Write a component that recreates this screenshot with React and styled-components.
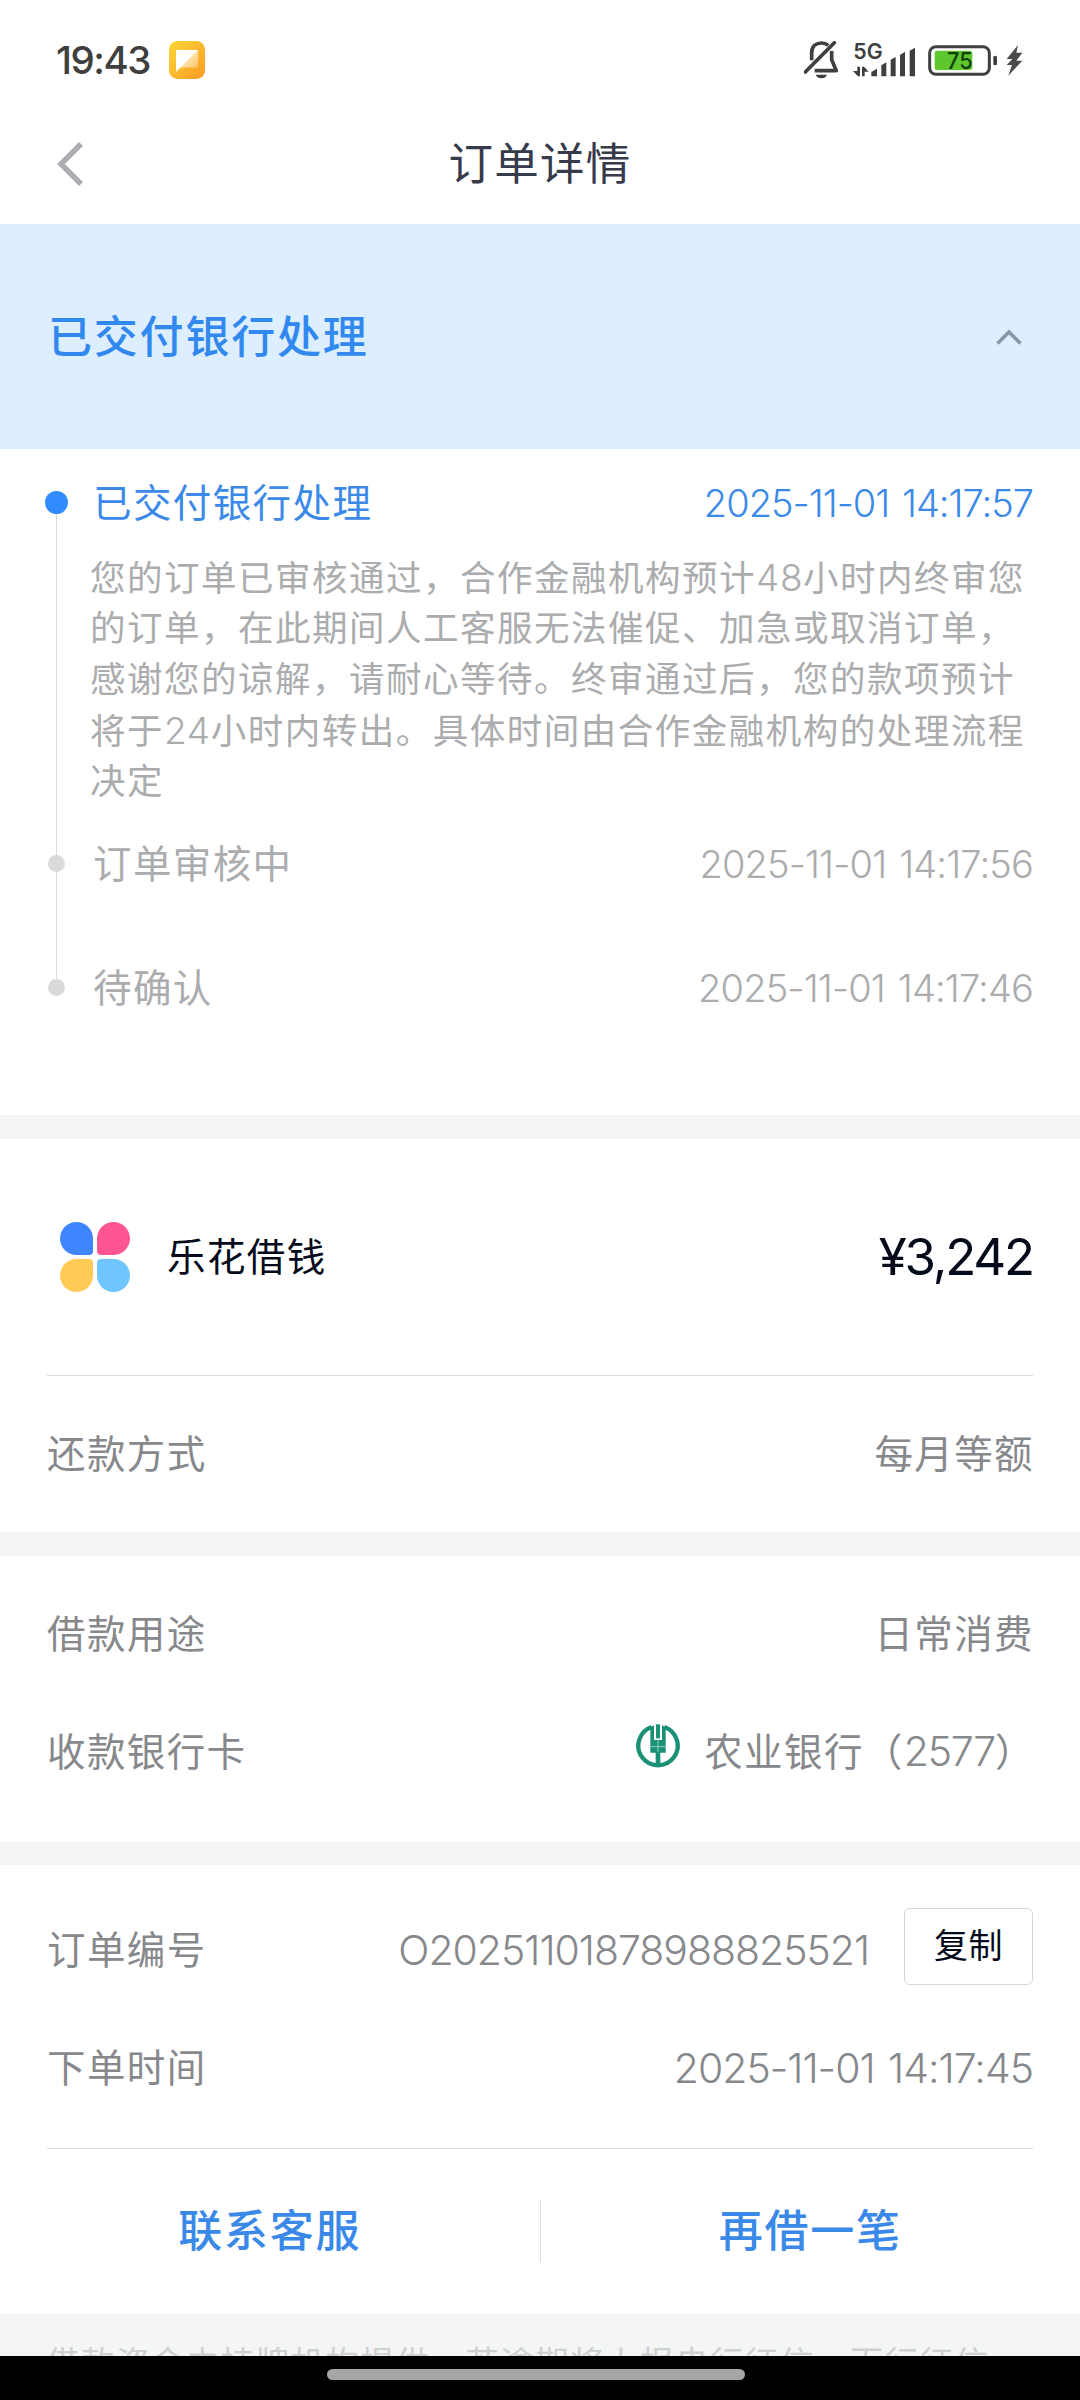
import React from 'react';
import styled, { createGlobalStyle } from 'styled-components';

const steps = [
  {
    title: '已交付银行处理',
    time: '2025-11-01 14:17:57',
    active: true,
    lines: [
      '您的订单已审核通过，合作金融机构预计48小时内终审您',
      '的订单，在此期间人工客服无法催促、加急或取消订单，',
      '感谢您的谅解，请耐心等待。终审通过后，您的款项预计',
      '将于24小时内转出。具体时间由合作金融机构的处理流程',
      '决定',
    ],
  },
  { title: '订单审核中', time: '2025-11-01 14:17:56' },
  { title: '待确认', time: '2025-11-01 14:17:46' },
];

// numbers inside Chinese text are set lighter and a touch larger
const withDigits = (line) =>
  line.split(/(\d+)/).map((part, i) => (i % 2 ? <NoteDigits key={i}>{part}</NoteDigits> : part));

const NoteIcon = () => (
  <svg width="36" height="38" viewBox="0 0 36 38">
    <defs>
      <linearGradient id="note" x1="0" y1="0" x2="1" y2="1">
        <stop offset="0" stopColor="#fbd836" />
        <stop offset="1" stopColor="#fb9a26" />
      </linearGradient>
      <linearGradient id="fold" x1="0" y1="0" x2="1" y2="1">
        <stop offset="0.3" stopColor="#fff" stopOpacity="0.75" />
        <stop offset="1" stopColor="#fff" stopOpacity="0.25" />
      </linearGradient>
    </defs>
    <rect width="36" height="38" rx="8.5" fill="url(#note)" />
    <path d="M29 9v17.500H11z" fill="url(#fold)" />
    <path d="M7 9h22L7 31z" fill="#fff" />
  </svg>
);

const MuteIcon = () => (
  <svg width="35" height="38" viewBox="12 36 105 114" fill="none" stroke="#3f3f3f">
    <path d="M35 94V72C35 50 50 42 65 42c8 0 15 3 20 7" strokeWidth="11" />
    <path d="M95 66v26l14 33H44" strokeWidth="11" strokeLinejoin="round" />
    <path d="M16 129l87-88" strokeWidth="11" strokeLinecap="round" />
    <path d="M47 137h34c-4 14-30 14-34 0z" fill="#3f3f3f" stroke="none" />
  </svg>
);

const SignalIcon = () => (
  <svg width="64" height="34" viewBox="156 35 192 102" fill="#3f3f3f" overflow="visible">
    <text x="160" y="84" fontFamily="Inter, sans-serif" fontSize="64" fontWeight="600" textLength="88" lengthAdjust="spacingAndGlyphs">5G</text>
    <path d="M172 106h8v29h-6l-15-16h13zM186 135v-29h6l14 15h-12v14z" />
    <path d="M214 135v-13l17-10v23zM244 135v-33l15-9v42zM272 135V85l15-8v58zM300 135V71l15-10v74zM329 135V58l16-9v86z" />
  </svg>
);

const BatteryIcon = () => (
  <svg width="70" height="31" viewBox="386 43 210 93" overflow="visible">
    <rect x="391" y="48" width="179" height="83" rx="19" fill="none" stroke="#3f3f3f" strokeWidth="9" />
    <rect x="406" y="60" width="113" height="58" rx="8" fill="#5fc72e" />
    <rect x="582" y="75" width="11" height="29" rx="5" fill="#3f3f3f" />
    <text x="443" y="115" fontFamily="Inter, sans-serif" fontSize="70" fontWeight="500" fill="#12400a" textLength="77" lengthAdjust="spacingAndGlyphs">75</text>
  </svg>
);

const BoltIcon = () => (
  <svg width="18" height="31" viewBox="615 43 54 93" fill="#4a4a4a">
    <path d="M654 43l-34 42h17l-17 18h16l-11 32 42-45h-18l18-24h-18z" />
  </svg>
);

const FlowerLogo = () => (
  <svg width="70" height="70" viewBox="0 0 70 70">
    <path d="M16.500 0a16.500 16.500 0 0 1 16.500 16.500v12.500a4 4 0 0 1-4 4H16.500a16.500 16.500 0 0 1 0-33z" fill="#3f85ff" />
    <path d="M53.500 0a16.500 16.500 0 0 1 0 33H41a4 4 0 0 1-4-4V16.500A16.500 16.500 0 0 1 53.500 0z" fill="#ff5595" />
    <path d="M16.500 37H29a4 4 0 0 1 4 4v12.500A16.500 16.500 0 1 1 16.500 37z" fill="#ffcb55" />
    <path d="M41 37h12.500A16.500 16.500 0 1 1 37 53.500V41a4 4 0 0 1 4-4z" fill="#6fc5ff" />
  </svg>
);

const BankLogo = () => (
  <svg width="44" height="44" viewBox="0 0 132 132" fill="none" stroke="#1a9175">
    <path d="M47 9A59 59 0 1 0 85 9" strokeWidth="13" />
    <path d="M43 10l11-6v44h24V4l11 6v76H73v38H59V86H43z" fill="#1a9175" stroke="none" />
    <path d="M60 1h12v42H60z" fill="#1a9175" stroke="none" />
    <path d="M66 48v36M44 68h44" stroke="#8fd0c0" strokeWidth="3" />
  </svg>
);

const App = () => (
  <Screen>
    <GlobalStyle />
    <StatusBar>
      <Clock>19:43</Clock>
      <NoteIcon />
      <StatusIcons>
        <MuteIcon />
        <SignalIcon />
        <BatteryIcon />
        <BoltIcon />
      </StatusIcons>
    </StatusBar>

    <NavBar>
      <BackButton aria-label="返回">
        <svg width="26" height="44" viewBox="0 0 26 44" fill="none" stroke="#adadb2" strokeWidth="5.500">
          <path d="M24 2L4 22l20 20" />
        </svg>
      </BackButton>
      <PageTitle>订单详情</PageTitle>
    </NavBar>

    <Banner>
      <BannerText>已交付银行处理</BannerText>
      <svg width="26" height="16" viewBox="0 0 26 16" fill="none" stroke="#8797a8" strokeWidth="3.500">
        <path d="M1.500 14.500L13 3l11.500 11.500" />
      </svg>
    </Banner>

    <Timeline>
      {steps.map((step, i) => (
        <Step key={step.time} $last={i === steps.length - 1}>
          <Rail>
            <Dot $active={step.active} />
            {i < steps.length - 1 && <RailLine />}
          </Rail>
          <StepBody>
            <StepHead $active={step.active}>
              <StepTitle>{step.title}</StepTitle>
              <StepTime $active={step.active}>{step.time}</StepTime>
            </StepHead>
            {step.lines && (
              <StepNote>
                {step.lines.map((line) => <NoteLine key={line}>{withDigits(line)}</NoteLine>)}
              </StepNote>
            )}
          </StepBody>
        </Step>
      ))}
    </Timeline>

    <Product>
      <ProductHead>
        <FlowerLogo />
        <ProductName>乐花借钱</ProductName>
        <Amount>¥3,242</Amount>
      </ProductHead>
      <Row $height={157}>
        <Label>还款方式</Label>
        <Value>每月等额</Value>
      </Row>
    </Product>

    <Usage>
      <Row $height={118}>
        <Label>借款用途</Label>
        <Value>日常消费</Value>
      </Row>
      <Row $height={118}>
        <Label>收款银行卡</Label>
        <BankCard>
          <BankLogo />
          <Value>农业银行（<Digits>2577</Digits>）</Value>
        </BankCard>
      </Row>
    </Usage>

    <Order>
      <Row $height={118}>
        <Label>订单编号</Label>
        <OrderNo>O20251101878988825521</OrderNo>
        <CopyButton>复制</CopyButton>
      </Row>
      <Row $height={118}>
        <Label>下单时间</Label>
        <OrderTime>2025-11-01 14:17:45</OrderTime>
      </Row>
      <Actions>
        <Action>联系客服</Action>
        <ActionSplit />
        <Action>再借一笔</Action>
      </Actions>
    </Order>

    <Disclaimer>借款资金由持牌机构提供，若逾期将上报央行征信，百行征信</Disclaimer>
    <GestureBar><Pill /></GestureBar>
  </Screen>
);

export default App;

const GlobalStyle = createGlobalStyle`
  * { box-sizing: border-box; }
  body { margin: 0; background: #f4f5f5; }
  button { border: none; background: none; padding: 0; font: inherit; color: inherit; }
  svg { display: block; flex: none; }
`;

const Screen = styled.div`
  width: 1080px; height: 2400px; overflow: hidden;
  display: flex; flex-direction: column;
  background: #f4f5f5; color: #87888b;
  font-family: Inter, "Noto Sans CJK SC", sans-serif;
  font-size: 38.5px; line-height: 1.2; white-space: nowrap;
`;

const StatusBar = styled.div`
  flex: none; height: 120px; padding: 0 57px 0 56px; background: #fff;
  display: flex; align-items: center;
`;
const Clock = styled.span`
  width: 113px; font-size: 38.5px; font-weight: 500; letter-spacing: -1.5px; color: #3f3f3f;
`;
const StatusIcons = styled.div`
  margin-left: auto; display: flex; align-items: center;
  > :nth-child(2) { margin: 0 12px 0 13px; }
  > :nth-child(4) { margin-left: 7px; }
`;

const NavBar = styled.div`
  flex: none; height: 104px; padding: 0 57px; background: #fff;
  display: grid; grid-template-columns: 60px 1fr 60px; align-items: center;
`;
const BackButton = styled.button` justify-self: start; margin-bottom: 16px; `;
const PageTitle = styled.h1`
  margin: 0 0 15px; text-align: center; font-size: 44.5px; font-weight: 400;
  letter-spacing: 1.2px; color: #363a4a;
`;

const Banner = styled.div`
  flex: none; height: 225px; padding: 0 58px 0 48px; background: #ddeeff;
  display: flex; align-items: center; justify-content: space-between;
`;
const BannerText = styled.span`
  padding-top: 1px; font-size: 44px; font-weight: 500; letter-spacing: 1.8px; color: #3189f0;
`;

const Timeline = styled.section`
  flex: none; height: 666px; padding: 24px 47px 0 45px; background: #fff;
`;
const Step = styled.div`
  display: flex; height: ${(p) => (p.$last ? '60px' : 'auto')};
  min-height: ${(p) => (p.$last ? 0 : '124px')};
`;
const Rail = styled.div`
  width: 23px; padding-top: 18px; margin-bottom: -18px;
  display: flex; flex-direction: column; align-items: center;
`;
const Dot = styled.i`
  flex: none; border-radius: 50%;
  width: ${(p) => (p.$active ? 23 : 17)}px;
  height: ${(p) => (p.$active ? 23 : 17)}px;
  margin: ${(p) => (p.$active ? 0 : '3px 0')};
  background: ${(p) => (p.$active ? '#318cff' : '#d9dadc')};
  & + i { margin-top: ${(p) => (p.$active ? 0 : '-3px')}; }
`;
const RailLine = styled.i` flex: 1; width: 1px; margin-bottom: -4px; background: #d9dadc; `;
const StepBody = styled.div` flex: 1; padding-left: 25px; `;
const StepHead = styled.div`
  height: 60px; display: flex; align-items: center; justify-content: space-between;
  color: ${(p) => (p.$active ? '#3b89e8' : '#abacae')};
`;
const StepTitle = styled.span` padding-top: 1px; letter-spacing: 1.4px; `;
const StepTime = styled.span`
  padding-top: 1px; font-size: 38px; font-weight: 300; word-spacing: 3px;
  letter-spacing: ${(p) => (p.$active ? -1 : -0.85)}px;
`;
const StepNote = styled.div` margin: 19px 0 27px -3px; color: #abacae; `;
const NoteLine = styled.div`
  height: 51px; line-height: 51px; font-size: 35.5px; letter-spacing: 1.5px;
`;
const NoteDigits = styled.span` font-size: 37px; font-weight: 300; letter-spacing: 0.6px; `;

const Card = styled.section`
  flex: none; margin-top: 24px; padding: 0 47px; background: #fff;
`;
const Row = styled.div`
  height: ${(p) => p.$height}px; display: flex; align-items: center; justify-content: space-between;
`;
const Label = styled.span` letter-spacing: 1.4px; `;
const Value = styled.span` letter-spacing: 1.4px; margin-right: -1px; `;
const Digits = styled.span` font-size: 41px; font-weight: 300; letter-spacing: -1.2px; `;

const Product = styled(Card)` height: 393px; `;
const ProductHead = styled.div`
  height: 237px; padding-left: 13px; border-bottom: 1px solid #d8d9d9;
  display: flex; align-items: center;
`;
const ProductName = styled.span` margin-left: 37px; letter-spacing: 1.4px; color: #040a1a; `;
const Amount = styled.span`
  margin-left: auto; font-size: 51px; letter-spacing: -2.2px; color: #040a1a;
`;

const Usage = styled(Card)` height: 286px; padding-top: 19px; `;
const BankCard = styled.div`
  display: flex; align-items: center; gap: 24px; margin-right: -1px;
  svg { margin-bottom: 12px; }
`;

const Order = styled(Card)` height: 449px; margin-top: 23px; padding-top: 26px; `;
const OrderNo = styled.span`
  margin-left: auto; padding-top: 1px; font-size: 41px; font-weight: 300; letter-spacing: -1.03px;
`;
const CopyButton = styled.button`
  width: 129px; height: 77px; margin: 0 0 7px 35px;
  border: 1px solid #d6d7d9; border-radius: 6px;
  font-size: 34px; letter-spacing: 0.5px; color: #040a1a;
`;
const OrderTime = styled.span`
  padding-top: 1px; font-size: 41px; font-weight: 300; letter-spacing: -1px; word-spacing: 3px;
`;
const Actions = styled.div`
  height: 165px; margin-top: 21px; border-top: 1px solid #d8d9d9;
  display: grid; grid-template-columns: 1fr 1px 1fr; align-items: center;
`;
const Action = styled.button`
  margin-left: -47px; text-align: center; font-size: 44px; font-weight: 500;
  letter-spacing: 1.7px; color: #3a89e8;
  &:last-child { margin: 0 -47px 0 0; }
`;
const ActionSplit = styled.i` height: 62px; background: #dedfe0; `;

const Disclaimer = styled.p`
  flex: none; height: 42px; margin: 0; padding: 25px 46px 0; overflow: hidden;
  font-size: 33.5px; line-height: 48px; letter-spacing: 1.45px; color: #cfd0d1;
`;
const GestureBar = styled.div`
  flex: 1; padding-top: 13px; background: #000; display: flex; justify-content: center;
`;
const Pill = styled.i` width: 418px; height: 11px; border-radius: 6px; background: #a5a5a5; margin-right: 8px; `;
